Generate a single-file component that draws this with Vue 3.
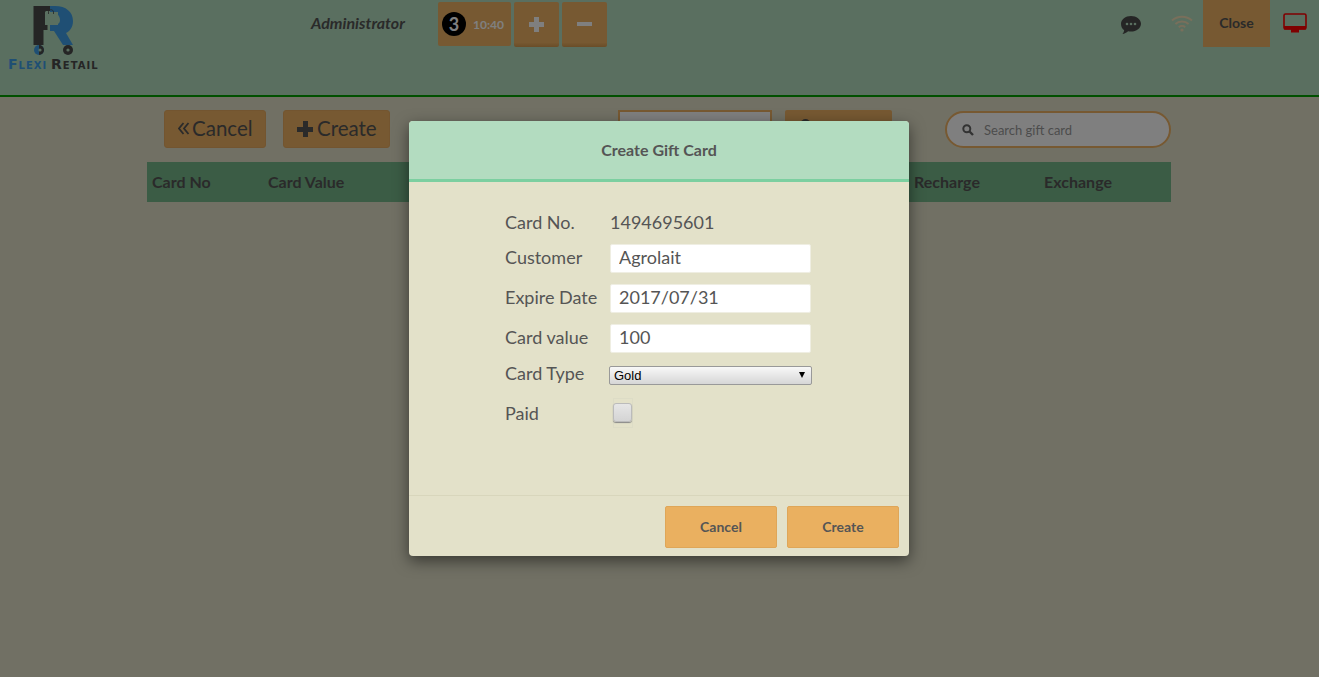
<script setup>
const columns = ['Card No', 'Card Value']
const columnsRight = ['Recharge', 'Exchange']
</script>

<template>
  <div class="page">
    <header class="topbar">
      <div class="logo">
        <svg class="logo-mark" width="100" height="58" viewBox="0 0 100 58">
          <path d="M33.500 6h17v5h-5v14h2v5h-4v15h-10z" fill="#4a4a4a" />
          <path d="M50 6h5c11 0 18 6 18 15 0 6-3 10-7 12l7 12h-10l-9-14h-4v-6h3c4 0 7-1 7-5 0-5-4-8-10-8z" fill="#3e9fe8" />
          <path d="M45 12h13v13h-13z" fill="#b4dec0" />
          <path d="M48.500 14v-2c0-3 5-3 5 0v2" fill="none" stroke="#4a4a4a" stroke-width=".8" />
          <circle cx="39" cy="50" r="5" fill="#3e9fe8" />
          <path d="M39 45a5 5 0 0 1 0 10z" fill="#4a4a4a" />
          <circle cx="40" cy="50" r="1.600" fill="#b4dec0" />
          <circle cx="68" cy="50" r="5" fill="#4a4a4a" />
          <circle cx="68" cy="50" r="1.600" fill="#b4dec0" />
        </svg>
        <div class="logo-text"><span class="flexi">Flexi</span> <span class="retail">Retail</span></div>
      </div>
      <div class="admin">Administrator</div>
      <div class="session">
        <div class="timer"><span class="badge">3</span><span class="time">10:40</span></div>
        <button class="square"><span class="plus"></span></button>
        <button class="square"><span class="minus"></span></button>
      </div>
      <div class="tools">
        <svg class="chat" width="22" height="20" viewBox="0 0 22 20">
          <path d="M11 1c5.500 0 10 3.400 10 7.800s-4.500 7.800-10 7.800c-1 0-2-.1-2.900-.3C6.500 17.800 4.500 18.800 2.500 19c.9-1 1.500-2.200 1.700-3.700C2 13.900 1 11.500 1 8.800 1 4.400 5.500 1 11 1z" fill="#4a4a4a" />
          <circle cx="7" cy="9" r="1.300" fill="#b4dec0" />
          <circle cx="11" cy="9" r="1.300" fill="#b4dec0" />
          <circle cx="15" cy="9" r="1.300" fill="#b4dec0" />
        </svg>
        <svg class="wifi" width="22" height="18" viewBox="0 0 22 18">
          <g fill="none" stroke="#f2dfb6" stroke-width="1.900">
            <path d="M1 6.500c5.500-5 14.500-5 20 0" />
            <path d="M4.400 10c3.600-3.300 9.600-3.300 13.200 0" />
            <path d="M7.800 13.200c1.800-1.600 4.600-1.600 6.400 0" />
          </g>
          <circle cx="11" cy="16" r="1.600" fill="#f2dfb6" />
        </svg>
        <button class="close">Close</button>
        <svg class="monitor" width="24" height="22" viewBox="0 0 24 22">
          <rect x="1" y="1" width="22" height="15" rx="1.500" fill="none" stroke="#f00" stroke-width="1.600" />
          <rect x="1" y="13" width="22" height="3.500" fill="#f00" />
          <rect x="8" y="16" width="8" height="3.500" fill="#f00" />
        </svg>
      </div>
    </header>

    <main class="content">
      <div class="actions">
        <button class="action cancel">
          <svg width="12" height="13" viewBox="0 0 12 13">
            <path d="M5.500 1L1 6.500 5.500 12M10.500 1L6 6.500 10.500 12" fill="none" stroke="#555" stroke-width="1.800" />
          </svg>
          Cancel
        </button>
        <button class="action create"><span class="plus-ico"></span>Create</button>
        <div class="filter">
          <div class="filter-box"></div>
          <button class="filter-btn"><span class="filter-ico"></span></button>
        </div>
        <div class="search">
          <svg width="12" height="12" viewBox="0 0 12 12">
            <circle cx="4.800" cy="4.800" r="3.500" fill="none" stroke="#666" stroke-width="2" />
            <path d="M7.500 7.500l3.500 3.500" stroke="#666" stroke-width="2.400" />
          </svg>
          <span>Search gift card</span>
        </div>
      </div>
      <div class="thead">
        <div class="th-group">
          <span v-for="c in columns" :key="c" class="th">{{ c }}</span>
        </div>
        <div class="th-group right">
          <span v-for="c in columnsRight" :key="c" class="th">{{ c }}</span>
        </div>
      </div>
    </main>

    <div class="overlay">
      <div class="modal">
        <div class="modal-head">Create Gift Card</div>
        <div class="modal-body">
          <div class="row first">
            <label>Card No.</label>
            <span class="value">1494695601</span>
          </div>
          <div class="row">
            <label>Customer</label>
            <input class="field" value="Agrolait" />
          </div>
          <div class="row">
            <label>Expire Date</label>
            <input class="field" value="2017/07/31" />
          </div>
          <div class="row">
            <label>Card value</label>
            <input class="field" value="100" />
          </div>
          <div class="row type">
            <label>Card Type</label>
            <div class="select">Gold<span class="arrow"></span></div>
          </div>
          <div class="row paid">
            <label>Paid</label>
            <div class="check-wrap"><div class="check"></div></div>
          </div>
        </div>
        <div class="modal-foot">
          <button class="foot-btn">Cancel</button>
          <button class="foot-btn">Create</button>
        </div>
      </div>
    </div>
  </div>
</template>

<style>
html, body {
  margin: 0;
  height: 100%;
}
#app {
  height: 100%;
}
</style>

<style scoped>
.page {
  position: relative;
  height: 677px;
  overflow: hidden;
  background: #e3e1c9;
  font-family: Lato, "Liberation Sans", sans-serif;
  color: #555;
}
button {
  font-family: inherit;
  border: 0;
  padding: 0;
}
.topbar {
  height: 95px;
  border-bottom: 2px solid #00a000;
  background: #b4dec0;
  display: flex;
  align-items: flex-start;
}
.logo {
  width: 311px;
  flex: none;
}
.logo-mark {
  display: block;
}
.logo-text {
  margin: -1px 0 0 8px;
  font: bold 14px/14px "DejaVu Sans", sans-serif;
  font-variant: small-caps;
  letter-spacing: 1px;
  word-spacing: -2px;
  white-space: nowrap;
}
.flexi {
  color: #3e9fe8;
}
.retail {
  color: #4a4a4a;
}
.admin {
  width: 127px;
  flex: none;
  padding-top: 13px;
  font-size: 16px;
  line-height: 19px;
  font-weight: 700;
  font-style: italic;
}
.session {
  display: flex;
  gap: 3px;
  padding-top: 2px;
}
.timer {
  width: 73px;
  height: 44px;
  box-sizing: border-box;
  padding-left: 4px;
  display: flex;
  align-items: center;
  background: #eeb264;
  border-radius: 2px;
}
.badge {
  width: 24px;
  height: 24px;
  border-radius: 50%;
  background: #000;
  color: #fff;
  font-size: 18px;
  font-weight: 700;
  line-height: 24px;
  text-align: center;
}
.time {
  margin-left: 7px;
  font-size: 12px;
  font-weight: 700;
  color: #fff;
}
.square {
  width: 45px;
  height: 45px;
  display: flex;
  align-items: center;
  justify-content: center;
  padding-bottom: 1px;
  background: linear-gradient(#eeb264 90%, #d59a50);
  border-radius: 2px;
}
.plus {
  width: 15px;
  height: 15px;
  background:
    linear-gradient(#fff, #fff) center / 15px 5px no-repeat,
    linear-gradient(#fff, #fff) center / 5px 15px no-repeat;
}
.minus {
  width: 15px;
  height: 4px;
  background: #fff;
}
.tools {
  margin-left: auto;
  display: flex;
  align-items: flex-start;
}
.chat {
  margin: 15px 0 0;
}
.wifi {
  margin: 14px 0 0 29px;
}
.close {
  width: 67px;
  height: 47px;
  margin-left: 10px;
  padding-bottom: 2px;
  background: #eeb264;
  color: #555;
  font-size: 14px;
  font-weight: 700;
}
.monitor {
  margin: 13px 12px 0 13px;
}
.content {
  width: 1024px;
  margin-left: 147px;
}
.actions {
  height: 65px;
  box-sizing: border-box;
  padding: 13px 0 0 17px;
  display: flex;
  align-items: flex-start;
}
.action {
  height: 38px;
  box-sizing: border-box;
  padding: 0 0 2px 13px;
  margin-right: 17px;
  background: #eeb264;
  border: 1px solid #e6ab60;
  border-radius: 3px;
  color: #555;
  font-size: 20.500px;
  display: flex;
  align-items: center;
  gap: 3px;
}
.action.cancel {
  width: 102px;
  gap: 2px;
}
.action.create {
  width: 107px;
  gap: 4px;
}
.plus-ico {
  width: 16px;
  height: 16px;
  margin-top: 2px;
  background:
    linear-gradient(#555, #555) center / 16px 5px no-repeat,
    linear-gradient(#555, #555) center / 5px 16px no-repeat;
}
.filter {
  display: flex;
  gap: 13px;
  margin-left: 211px;
}
.filter-box {
  width: 154px;
  height: 38px;
  box-sizing: border-box;
  background: #fff;
  border: 2px solid #eeb264;
}
.filter-btn {
  width: 107px;
  height: 38px;
  box-sizing: border-box;
  padding: 9px 0 0 16px;
  display: flex;
  align-items: flex-start;
  background: #eeb264;
  border-radius: 2px;
}
.filter-ico {
  width: 9px;
  height: 9px;
  border-radius: 50%;
  background: #555;
}
.search {
  width: 226px;
  height: 37px;
  margin-left: auto;
  margin-top: 1px;
  box-sizing: border-box;
  border: 2px solid #eeb264;
  border-radius: 19px;
  background: #fff;
  display: flex;
  align-items: center;
  gap: 10px;
  padding-left: 15px;
  font-size: 13px;
  color: #999;
}
.thead {
  height: 40px;
  box-sizing: border-box;
  padding-bottom: 2px;
  background: #76b88a;
  display: flex;
  justify-content: space-between;
  align-items: center;
  font-size: 16px;
  font-weight: 700;
}
.th-group {
  display: flex;
  padding-left: 5px;
}
.th:first-child {
  width: 116px;
}
.th-group.right {
  padding: 0 59px 0 0;
}
.th-group.right .th:first-child {
  width: 130px;
}
.overlay {
  position: absolute;
  inset: 0;
  background: rgba(0, 0, 0, .5);
}
.modal {
  position: absolute;
  left: 409px;
  top: 121px;
  width: 500px;
  height: 435px;
  display: flex;
  flex-direction: column;
  background: #e3e1c9;
  border-radius: 4px;
  box-shadow: 0 5px 15px rgba(0, 0, 0, .5);
  overflow: hidden;
}
.modal-head {
  height: 58px;
  border-bottom: 3px solid #7ccfa0;
  background: #b3dcc0;
  text-align: center;
  font-size: 16px;
  font-weight: 700;
  line-height: 58px;
}
.modal-body {
  flex: 1;
  padding: 27px 0 0 96px;
  font-size: 18px;
}
.row {
  display: flex;
  align-items: center;
  height: 40px;
}
.row.first {
  height: 26px;
  margin-bottom: 3px;
}
.row.type {
  height: 30px;
  margin-top: 1px;
}
.row.paid {
  height: 44px;
  margin-top: 3px;
}
label {
  width: 105px;
  flex: none;
  margin-top: -2px;
}
.row.first label {
  margin-top: 0;
}
.field {
  width: 201px;
  height: 29px;
  box-sizing: border-box;
  border: 1px solid #efeee2;
  border-radius: 2px;
  padding: 0 8px 2px;
  background: #fff;
  color: #555;
  font: 18px Lato, sans-serif;
  outline: none;
}
.select {
  width: 203px;
  height: 19px;
  margin: 2px 0 0 -1px;
  box-sizing: border-box;
  border: 1px solid #999;
  border-radius: 2px;
  padding-left: 4px;
  background: linear-gradient(#f8f8f8, #d6d6d6);
  color: #000;
  font: 13px/17px "Liberation Sans", sans-serif;
  position: relative;
}
.arrow {
  position: absolute;
  right: 6px;
  top: 5px;
  border-left: 3.500px solid transparent;
  border-right: 3.500px solid transparent;
  border-top: 6px solid #000;
}
.check-wrap {
  width: 20px;
  height: 30px;
  margin: -3px 0 0 3px;
  box-sizing: border-box;
  padding-top: 4px;
  border: 1px solid #dddcc6;
}
.check {
  width: 19px;
  height: 19px;
  margin-left: -1px;
  box-sizing: border-box;
  border: 1px solid #bbb;
  border-radius: 3px;
  background: linear-gradient(#e6e6e6, #d4d4d4);
  box-shadow: 0 1px 1px #888;
}
.modal-foot {
  height: 61px;
  border-top: 1px solid #d8d6bc;
  display: flex;
  justify-content: flex-end;
  gap: 10px;
  padding: 10px 10px 0 0;
  box-sizing: border-box;
}
.foot-btn {
  width: 112px;
  height: 42px;
  padding-bottom: 2px;
  background: #eab060;
  border: 1px solid #dfa658;
  border-radius: 2px;
  color: #555;
  font-size: 14px;
  font-weight: 700;
}
</style>
